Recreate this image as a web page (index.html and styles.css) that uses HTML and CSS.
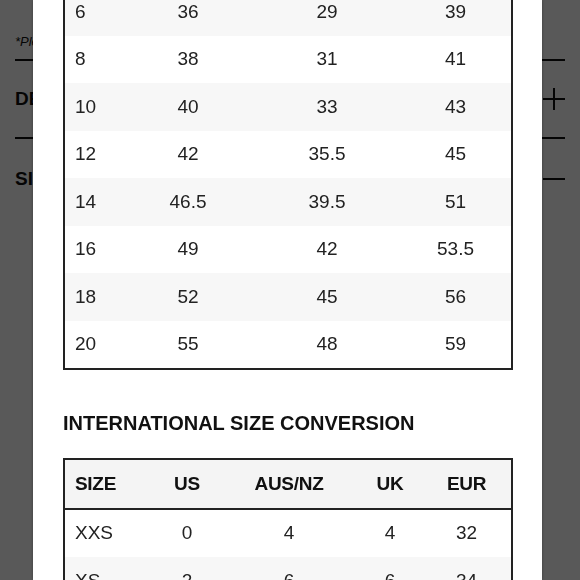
FILE: index.html
```html
<!DOCTYPE html>
<html>
<head>
<meta charset="utf-8">
<link rel="stylesheet" href="styles.css">
</head>
<body>
<div class="page">
  <p class="note">*Please note: sizing may vary by style</p>
  <div class="acc-row">
    <span class="acc-title">DETAILS</span>
    <svg class="acc-icon" width="22" height="22" viewBox="0 0 22 22"><path d="M0 11H22M11 0V22" stroke="#111" stroke-width="2" fill="none"/></svg>
  </div>
  <div class="acc-row last">
    <span class="acc-title">SIZE &amp; FIT</span>
    <svg class="acc-icon" width="22" height="22" viewBox="0 0 22 22"><path d="M0 11H22" stroke="#111" stroke-width="2" fill="none"/></svg>
  </div>
</div>
<div class="overlay">
  <div class="modal">
    <table class="size-table t1">
      <colgroup><col class="c1"><col class="c2"><col class="c3"><col class="c4"></colgroup>
      <tbody>
        <tr class="alt"><td>6</td><td>36</td><td>29</td><td>39</td></tr>
        <tr><td>8</td><td>38</td><td>31</td><td>41</td></tr>
        <tr class="alt"><td>10</td><td>40</td><td>33</td><td>43</td></tr>
        <tr><td>12</td><td>42</td><td>35.5</td><td>45</td></tr>
        <tr class="alt"><td>14</td><td>46.5</td><td>39.5</td><td>51</td></tr>
        <tr><td>16</td><td>49</td><td>42</td><td>53.5</td></tr>
        <tr class="alt"><td>18</td><td>52</td><td>45</td><td>56</td></tr>
        <tr><td>20</td><td>55</td><td>48</td><td>59</td></tr>
      </tbody>
    </table>
    <h2 class="section-title">INTERNATIONAL SIZE CONVERSION</h2>
    <table class="size-table t2">
      <colgroup><col class="d1"><col class="d2"><col class="d3"><col class="d4"><col class="d5"></colgroup>
      <thead>
        <tr><th>SIZE</th><th>US</th><th>AUS/NZ</th><th>UK</th><th>EUR</th></tr>
      </thead>
      <tbody>
        <tr><td>XXS</td><td>0</td><td>4</td><td>4</td><td>32</td></tr>
        <tr class="alt"><td>XS</td><td>2</td><td>6</td><td>6</td><td>34</td></tr>
      </tbody>
    </table>
  </div>
</div>
</body>
</html>
```
FILE: styles.css
```css
html, body {
  margin: 0;
  padding: 0;
  height: 100%;
  overflow: hidden;
}
body {
  background: #ffffff;
  font-family: "Liberation Sans", Arial, sans-serif;
  color: #111;
}
.page {
  padding: 0 15px;
}
.note {
  margin: 0;
  padding-top: 34px;
  padding-bottom: 10px;
  font-size: 13px;
  font-style: italic;
  border-bottom: 2px solid #111;
  white-space: nowrap;
}
.acc-row {
  display: flex;
  justify-content: space-between;
  align-items: center;
  height: 76px;
  border-bottom: 2px solid #111;
  font-size: 19px;
  font-weight: bold;
}
.acc-row.last {
  border-bottom: none;
  height: 80px;
}
.acc-icon {
  display: block;
}
.overlay {
  position: fixed;
  inset: 0;
  background: rgba(0, 0, 0, 0.65);
}
.modal {
  position: absolute;
  left: 33px;
  top: 0;
  bottom: 0;
  width: 509px;
  background: #fff;
  box-sizing: border-box;
  padding: 0 30px;
  color: #222;
  box-shadow: 0 0 3px rgba(0, 0, 0, 0.35);
}
.size-table {
  width: 448px;
  border-collapse: collapse;
  border: 2px solid #222;
  table-layout: fixed;
  font-size: 19px;
}
.t1 {
  margin-top: -14px;
}
.size-table td, .size-table th {
  height: 47.5px;
  padding: 0;
  text-align: center;
  vertical-align: middle;
}
.size-table td:first-child, .size-table th:first-child {
  text-align: left;
  padding-left: 10px;
}
.size-table tr.alt td {
  background: #f7f7f7;
}
.c1 { width: 58px; }
.c2 { width: 132px; }
.c3 { width: 146px; }
.c4 { width: 112px; }
.d1 { width: 90px; }
.d2 { width: 66px; }
.d3 { width: 138px; }
.d4 { width: 64px; }
.d5 { width: 90px; }
.section-title {
  margin: 41px 0 23px;
  font-size: 20px;
  line-height: 24px;
  font-weight: bold;
  letter-spacing: 0;
  color: #111;
}
.t2 thead th {
  background: #f4f4f4;
  border-bottom: 2px solid #222;
  font-weight: bold;
  letter-spacing: -0.3px;
  color: #111;
}
```
